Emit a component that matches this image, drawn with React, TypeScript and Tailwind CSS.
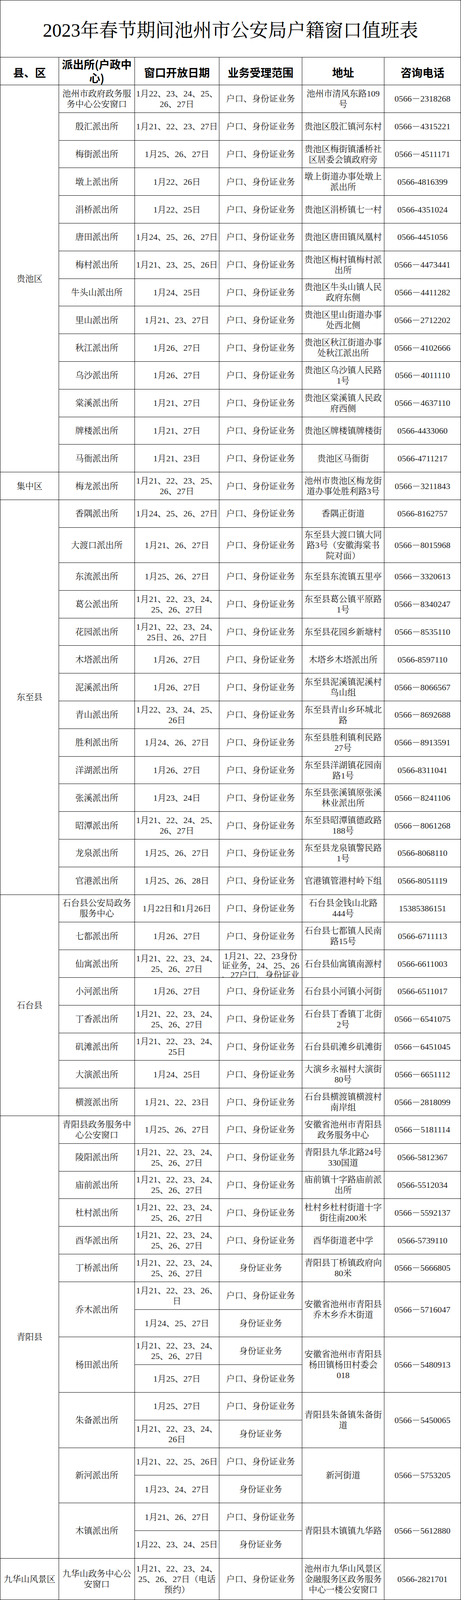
import React, { useEffect, useState } from "react";

type Sub = { date: string[]; biz: string[] };
type Row = {
  station: string[];
  subs: Sub[];
  addr: string[];
  phone: string;
  h?: number;
  clip?: boolean;
};
type Group = { county: string; rows: Row[] };

const HB = "户口、身份证业务";
const SF = "身份证业务";
const D7 = ["1月21、22、23、24、", "25、26、27日"];

const r = (
  station: string | string[],
  date: string | string[],
  addr: string | string[],
  phone: string,
  biz: string | string[] = HB,
  extra: Partial<Row> = {}
): Row => ({
  station: Array.isArray(station) ? station : [station],
  subs: [
    {
      date: Array.isArray(date) ? date : [date],
      biz: Array.isArray(biz) ? biz : [biz],
    },
  ],
  addr: Array.isArray(addr) ? addr : [addr],
  phone,
  ...extra,
});

const r2 = (
  station: string,
  subs: [string | string[], string][],
  addr: string | string[],
  phone: string
): Row => ({
  station: [station],
  subs: subs.map(([d, b]) => ({ date: Array.isArray(d) ? d : [d], biz: [b] })),
  addr: Array.isArray(addr) ? addr : [addr],
  phone,
});

const groups: Group[] = [
  {
    county: "贵池区",
    rows: [
      r(["池州市政府政务服", "务中心公安窗口"], ["1月22、23、24、25、", "26、27日"], ["池州市清风东路109", "号"], "0566－2318268"),
      r("殷汇派出所", "1月21、22、23、27日", "贵池区殷汇镇河东村", "0566－4315221"),
      r("梅街派出所", "1月25、26、27日", ["贵池区梅街镇潘桥社", "区居委会镇政府旁"], "0566－4511171"),
      r("墩上派出所", "1月22、26日", ["墩上街道办事处墩上", "派出所"], "0566-4816399"),
      r("涓桥派出所", "1月22、25日", "贵池区涓桥镇七一村", "0566-4351024"),
      r("唐田派出所", "1月24、25、26、27日", "贵池区唐田镇凤凰村", "0566-4451056"),
      r("梅村派出所", "1月21、23、25、26日", ["贵池区梅村镇梅村派", "出所"], "0566－4473441"),
      r("牛头山派出所", "1月24、25日", ["贵池区牛头山镇人民", "政府东侧"], "0566－4411282"),
      r("里山派出所", "1月21、23、27日", ["贵池区里山街道办事", "处西北侧"], "0566－2712202"),
      r("秋江派出所", "1月26、27日", ["贵池区秋江街道办事", "处秋江派出所"], "0566－4102666"),
      r("乌沙派出所", "1月26、27日", ["贵池区乌沙镇人民路", "1号"], "0566－4011110"),
      r("棠溪派出所", "1月21、27日", ["贵池区棠溪镇人民政", "府西侧"], "0566－4637110"),
      r("牌楼派出所", "1月21、27日", "贵池区牌楼镇牌楼街", "0566-4433060"),
      r("马衙派出所", "1月21、23日", "贵池区马衙街", "0566-4711217"),
    ],
  },
  {
    county: "集中区",
    rows: [
      r("梅龙派出所", ["1月21、22、23、25、", "26、27日"], ["池州市贵池区梅龙街", "道办事处胜利路3号"], "0566－3211843"),
    ],
  },
  {
    county: "东至县",
    rows: [
      r("香隅派出所", "1月24、25、26、27日", "香隅正街道", "0566-8162757"),
      r("大渡口派出所", "1月21、26、27日", ["东至县大渡口镇大同", "路3号（安徽海棠书", "院对面）"], "0566－8015968", HB, { h: 102 }),
      r("东流派出所", "1月25、26、27日", "东至县东流镇五里亭", "0566－3320613"),
      r("葛公派出所", D7, ["东至县葛公镇平原路", "1号"], "0566－8340247"),
      r("花园派出所", ["1月21、22、23、24、", "25日、26、27日"], "东至县花园乡新塘村", "0566－8535110"),
      r("木塔派出所", "1月26、27日", "木塔乡木塔派出所", "0566-8597110"),
      r("泥溪派出所", "1月26、27日", ["东至县泥溪镇泥溪村", "鸟山组"], "0566－8066567"),
      r("青山派出所", ["1月22、23、24、25、", "26日"], ["东至县青山乡环城北", "路"], "0566－8692688"),
      r("胜利派出所", "1月24、26、27日", ["东至县胜利镇利民路", "27号"], "0566－8913591"),
      r("洋湖派出所", "1月26、27日", ["东至县洋湖镇花园南", "路1号"], "0566-8311041"),
      r("张溪派出所", "1月23、24日", ["东至县张溪镇原张溪", "林业派出所"], "0566－8241106"),
      r("昭潭派出所", ["1月21、22、24、25、", "26、27日"], ["东至县昭潭镇德政路", "188号"], "0566－8061268"),
      r("龙泉派出所", "1月25、26、27日", ["东至县龙泉镇警民路", "1号"], "0566-8068110"),
      r("官港派出所", "1月25、26、28日", "官港镇管港村岭下组", "0566-8051119"),
    ],
  },
  {
    county: "石台县",
    rows: [
      r(["石台县公安局政务", "服务中心"], "1月22日和1月26日", ["石台县金钱山北路", "444号"], "15385386151"),
      r("七都派出所", "1月26、27日", ["石台县七都镇人民南", "路15号"], "0566-6711113"),
      r("仙寓派出所", D7, "石台县仙寓镇南源村", "0566-6611003", ["1月21、22、23身份", "证业务，24、25、26", "、27户口、身份证业"], { clip: true }),
      r("小河派出所", "1月26、27日", "石台县小河镇小河街", "0566-6511017"),
      r("丁香派出所", D7, ["石台县丁香镇丁北街", "2号"], "0566－6541075"),
      r("矶滩派出所", ["1月21、22、23、24、", "25日"], "石台县矶滩乡矶滩街", "0566－6451045"),
      r("大演派出所", "1月24、25日", ["大演乡永福村大演街", "80号"], "0566－6651112"),
      r("横渡派出所", "1月21、22、23日", ["石台县横渡镇横渡村", "南岸组"], "0566－2818099"),
    ],
  },
  {
    county: "青阳县",
    rows: [
      r(["青阳县政务服务中", "心公安窗口"], "1月25、26、27日", ["安徽省池州市青阳县", "政务服务中心"], "0566－5181114"),
      r("陵阳派出所", D7, ["青阳县九华北路24号", "330国道"], "0566-5812367"),
      r("庙前派出所", D7, ["庙前镇十字路庙前派", "出所"], "0566-5512034"),
      r("杜村派出所", D7, ["杜村乡杜村街道十字", "街往南200米"], "0566－5592137"),
      r("酉华派出所", D7, "酉华街道老中学", "0566-5739110"),
      r("丁桥派出所", D7, ["青阳县丁桥镇政府向", "80米"], "0566－5666805", SF),
      r2("乔木派出所", [[["1月21、22、23、26、", "日"], HB], ["1月24、25、27日", SF]], ["安徽省池州市青阳县", "乔木乡乔木街道"], "0566－5716047"),
      r2("杨田派出所", [[D7, SF], ["1月25、27日", HB]], ["安徽省池州市青阳县", "杨田镇杨田村委会", "018"], "0566－5480913"),
      r2("朱备派出所", [["1月25、27日", HB], [["1月21、22、23、24、", "26日"], SF]], ["青阳县朱备镇朱备街", "道"], "0566－5450065"),
      r2("新河派出所", [["1月21、22、25、26日", HB], ["1月23、24、27日", SF]], "新河街道", "0566－5753205"),
      r2("木镇派出所", [["1月21、26、27日", HB], ["1月22、23、24、25日", SF]], "青阳县木镇镇九华路", "0566－5612880"),
    ],
  },
  {
    county: "九华山风景区",
    rows: [
      r(["九华山政务中心公", "安窗口"], ["1月21、22、23、24、", "25、26、27日（电话", "预约）"], ["池州市九华山风景区", "金融服务区政务服务", "中心一楼公安窗口"], "0566-2821701", HB, { h: 120 }),
    ],
  },
];

// designed page height; the header row (71px) plus top border keep their size
const PAGE_H = 4619;
const FIXED = 72;

const Lines = ({ lines }: { lines: string[] }) => (
  <div className="text-center whitespace-nowrap">
    {lines.map((l, i) => (
      <div key={i}>{l}</div>
    ))}
  </div>
);

const box =
  "flex shrink-0 items-center justify-center border-r border-b border-black";

function useFit() {
  const calc = () =>
    typeof window === "undefined" || !window.innerHeight
      ? 1
      : Math.min(1, (window.innerHeight - FIXED) / (PAGE_H - FIXED));
  const [k, setK] = useState(calc);
  useEffect(() => {
    const on = () => setK(calc());
    on();
    window.addEventListener("resize", on);
    return () => window.removeEventListener("resize", on);
  }, []);
  return k;
}

export default function App() {
  const k = useFit();
  const H = (n: number) => n * k;

  return (
    <div className="w-[1179px] bg-white">
      <div className="flex w-[1179px] flex-col border-l border-t border-black font-['Liberation_Serif','Noto_Serif_CJK_SC','Noto_Sans_CJK_SC',serif] text-[22px] leading-[27px] text-[#1c1c1c]">
        {/* title */}
        <div
          className="flex items-center justify-center border-r border-b border-black pt-[8px] text-[48px] leading-[56px] text-black"
          style={{ height: H(165) }}
        >
          2023年春节期间池州市公安局户籍窗口值班表
        </div>

        {/* header */}
        <div className="flex h-[71px] font-['Noto_Sans_CJK_SC',sans-serif] text-[28px] font-bold leading-[35px] text-black">
          <div className={`${box} w-[150px] pt-[6px]`}>县、区</div>
          <div className={`${box} w-[194px]`}>
            <div className="text-center">
              <div>派出所(户政中</div>
              <div>心)</div>
            </div>
          </div>
          <div className={`${box} w-[216px] pt-[6px]`}>窗口开放日期</div>
          <div className={`${box} w-[212px] pt-[6px]`}>业务受理范围</div>
          <div className={`${box} w-[210px] pt-[6px]`}>地址</div>
          <div className={`${box} w-[196px] pt-[6px]`}>咨询电话</div>
        </div>

        {/* body */}
        {groups.map((g, gi) => (
          <div key={gi} className="flex">
            <div className={`${box} w-[150px]`}>{g.county}</div>
            <div className="flex flex-col">
              {g.rows.map((row, ri) => (
                <div key={ri} className="flex">
                  <div className={`${box} w-[194px]`}>
                    <Lines lines={row.station} />
                  </div>
                  <div className="flex w-[428px] shrink-0 flex-col">
                    {row.subs.map((sub, si) => (
                      <div
                        key={si}
                        className="flex"
                        style={{ height: H(row.h ?? 80) }}
                      >
                        <div className={`${box} w-[216px]`}>
                          <Lines lines={sub.date} />
                        </div>
                        {row.clip ? (
                          <div
                            className="flex w-[212px] shrink-0 items-start justify-center overflow-hidden border-r border-b border-black"
                            style={{
                              paddingTop: H(4),
                              lineHeight: `${H(27)}px`,
                            }}
                          >
                            <Lines lines={sub.biz} />
                          </div>
                        ) : (
                          <div className={`${box} w-[212px]`}>
                            <Lines lines={sub.biz} />
                          </div>
                        )}
                      </div>
                    ))}
                  </div>
                  <div className={`${box} w-[210px]`}>
                    <Lines lines={row.addr} />
                  </div>
                  <div className={`${box} w-[196px]`}>
                    <Lines lines={[row.phone]} />
                  </div>
                </div>
              ))}
            </div>
          </div>
        ))}
      </div>
    </div>
  );
}
